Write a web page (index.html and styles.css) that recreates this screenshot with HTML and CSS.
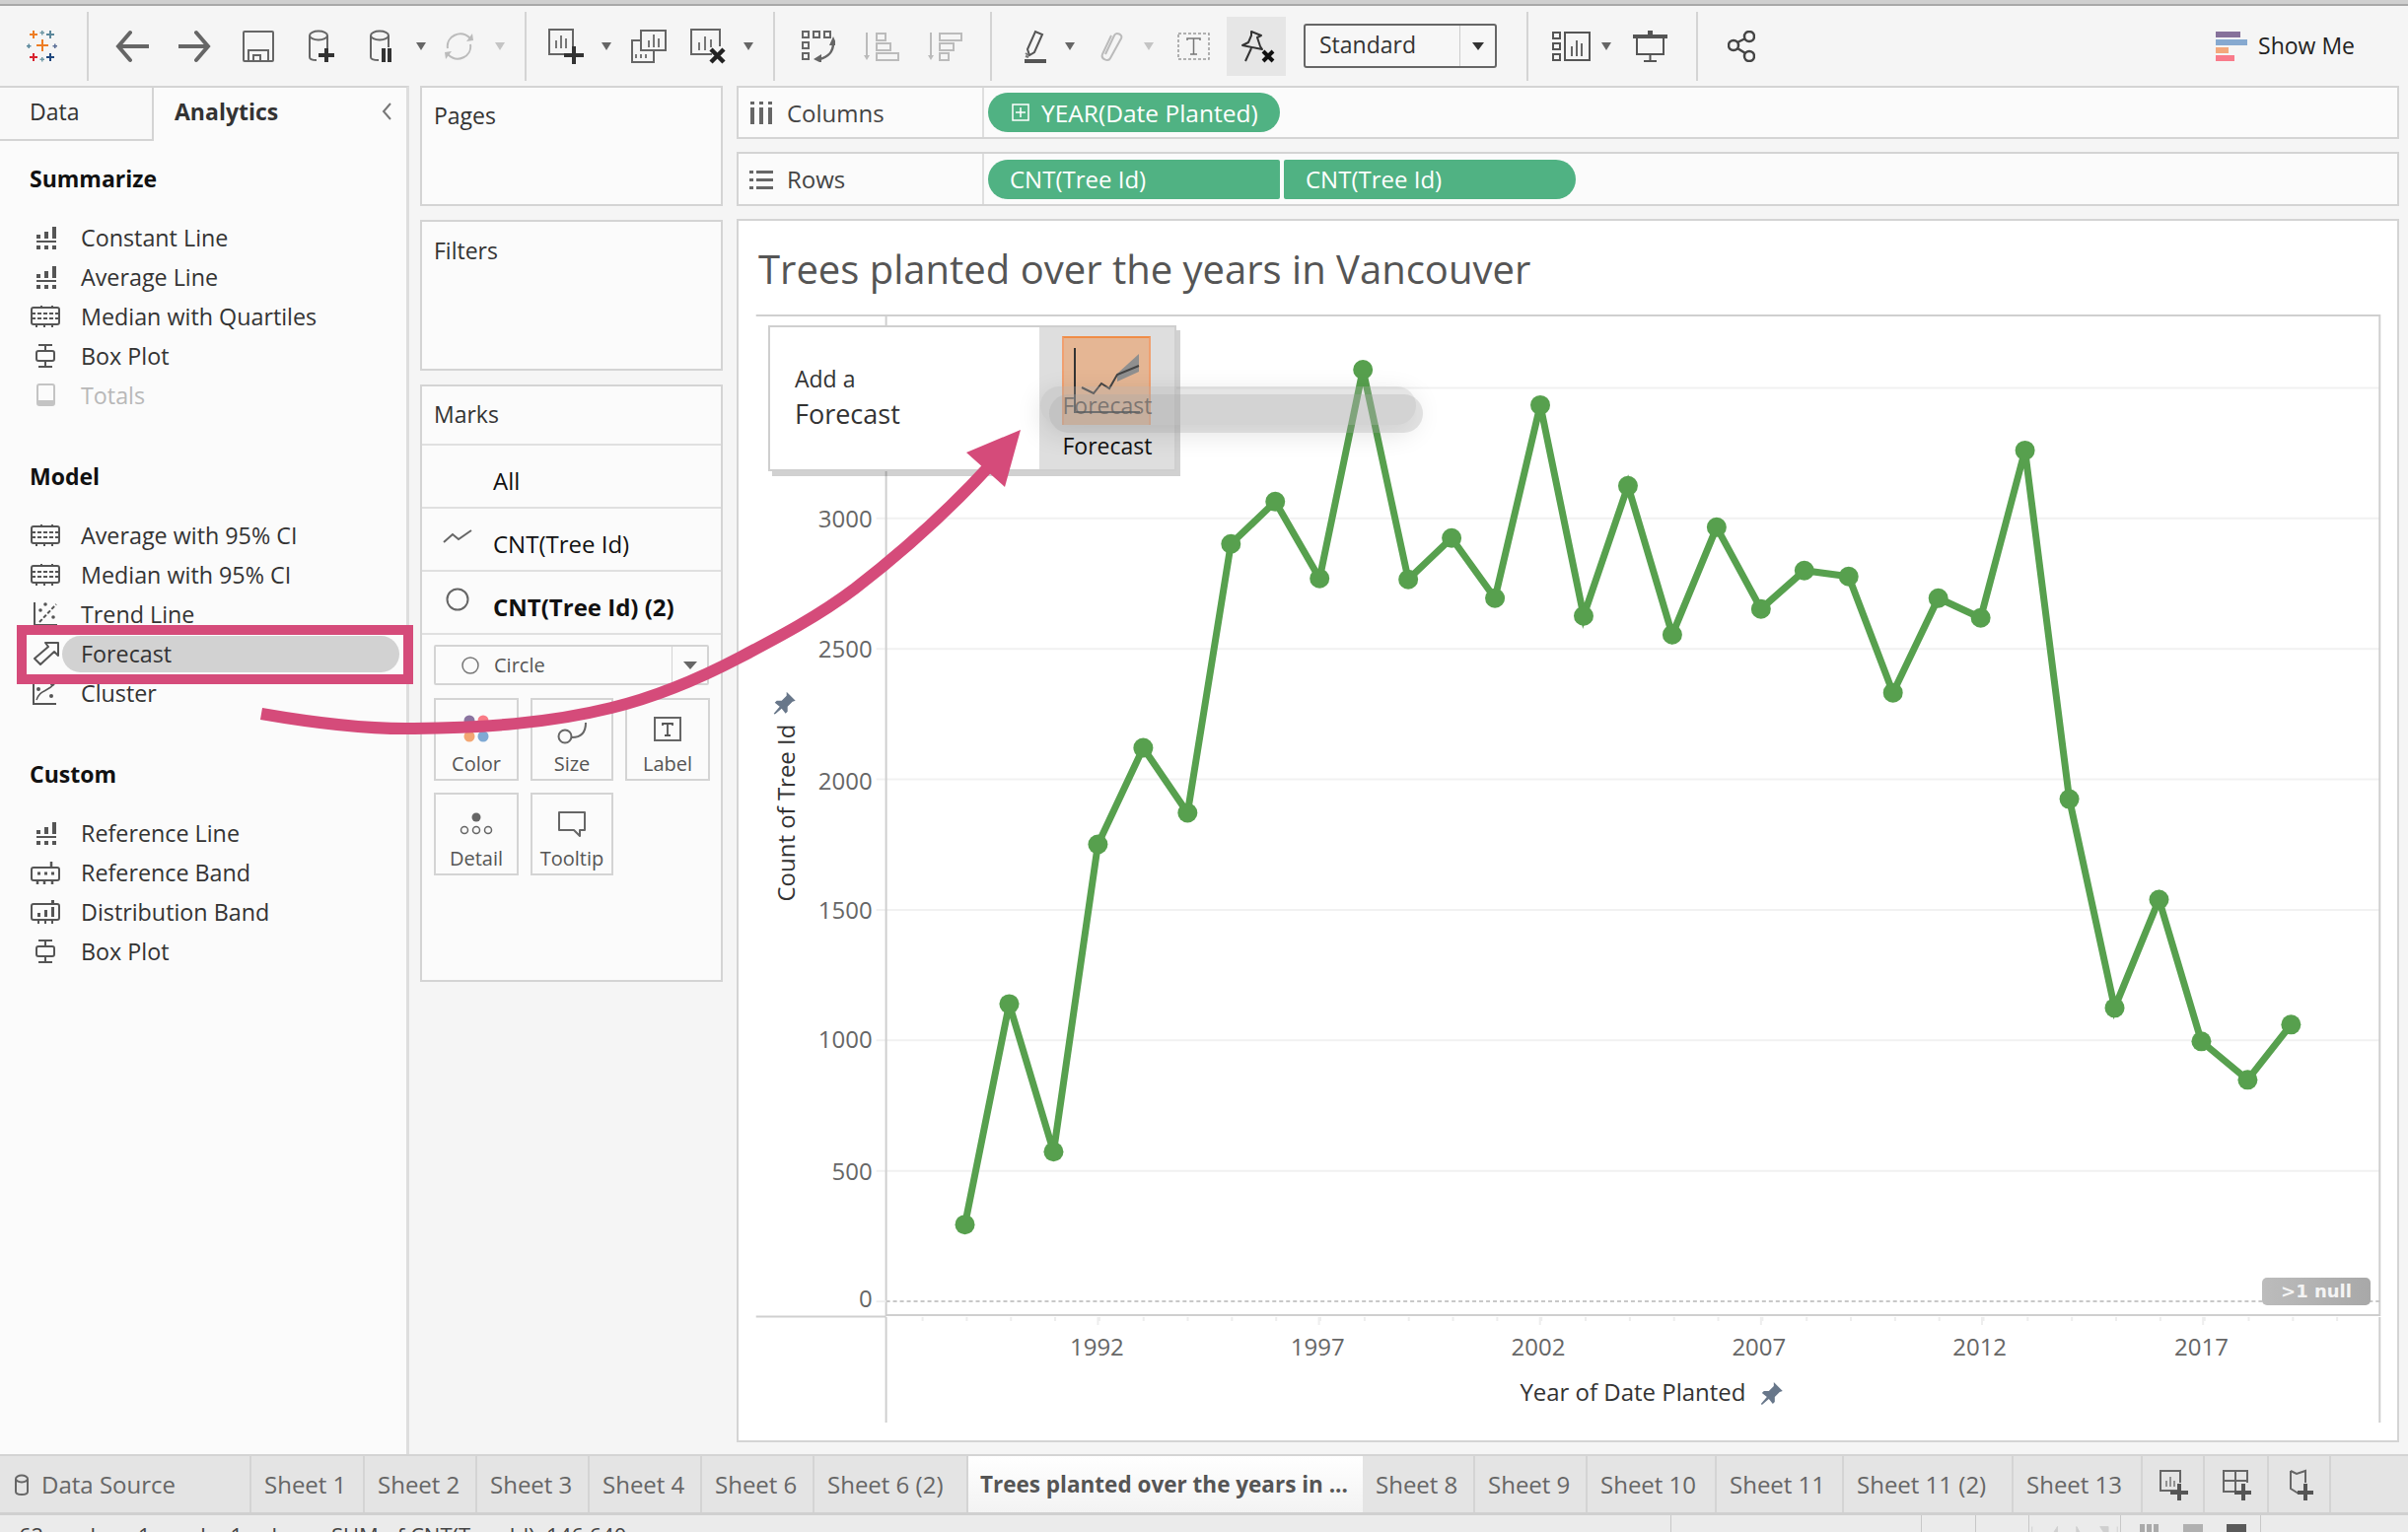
FILE: index.html
```html
<!DOCTYPE html>
<html lang="en">
<head>
    <meta charset="UTF-8">
    <title>Tableau - Trees planted over the years in Vancouver</title>
    <link rel="stylesheet" href="styles.css">
</head>
<body>
    <!-- icons used more than once -->
    <svg class="defs" width="0" height="0">
        <symbol id="i-ref" viewBox="0 0 30 24">
            <path d="M6 9h4v4H6zM14 6h4v7h-4zM22 1h4v12h-4zM6 15h20v2H6zM6 20h4v4H6zM14 20h4v4h-4zM22 20h4v4h-4z" fill="#555"/>
        </symbol>
        <symbol id="i-band" viewBox="0 0 30 24">
            <rect x="1" y="3" width="28" height="17" rx="2" fill="none" stroke="#555" stroke-width="2"/>
            <path d="M1 9h28M1 14h28" stroke="#555" stroke-width="2" stroke-dasharray="4 2"/>
            <path d="M6 20v3M14 20v3M22 20v3M11 1v2M22 1v2" stroke="#555" stroke-width="2"/>
        </symbol>
        <symbol id="i-box" viewBox="0 0 30 24">
            <path d="M15 1v22M8 1h14M8 23h14" stroke="#555" stroke-width="2" fill="none"/>
            <rect x="6" y="7" width="18" height="10" rx="2" fill="#fbfbfb" stroke="#555" stroke-width="2"/>
        </symbol>
        <symbol id="i-cyl" viewBox="0 0 16 22">
            <path d="M2 5v13c0 4 12 4 12 0V5" fill="none" stroke="#666" stroke-width="2"/>
            <ellipse cx="8" cy="5" rx="6" ry="3.5" fill="none" stroke="#666" stroke-width="2"/>
        </symbol>
        <symbol id="i-tack" viewBox="0 0 24 24">
            <path d="M14 1l9 9-3 1-5 5v5l-2 2-4-5-7 6-1-1 6-7-5-4 2-2h5l5-5z"/>
        </symbol>
    </svg>

    <div class="titlebar"></div>

    <div class="toolbar">
        <svg class="tool ml27" width="32" height="32" viewBox="0 0 32 32">
            <path d="M15 9h2v5h5v2h-5v5h-2v-5h-5v-2h5z" fill="#ee7d23"/>
            <path d="M6 0h2v3h3v2H8v3H6V5H3V3h3z" fill="#ee7d23"/>
            <path d="M23 0h2v3h3v2h-3v3h-2V5h-3V3h3z" fill="#5b879b"/>
            <path d="M6 23h2v3h3v2H8v3H6v-3H3v-2h3z" fill="#d8232f"/>
            <path d="M23 23h2v3h3v2h-3v3h-2v-3h-3v-2h3z" fill="#1f477d"/>
            <path d="M15 0h1.500v1.500H18v1.500h-1.500v1.500H15V3h-1.500V1.500H15z" fill="#7199a6"/>
            <path d="M1.500 13.500h1.500V15h1.500v1.500H3V18H1.500v-1.500H0V15h1.500z" fill="#59879b"/>
            <path d="M28 13.500h1.500V15H31v1.500h-1.500V18H28v-1.500h-1.500V15H28z" fill="#5b6f96"/>
            <path d="M15 27h1.500v1.500H18V30h-1.500v1.500H15V30h-1.500v-1.500H15z" fill="#7099a6"/>
        </svg>
        <span class="sep ml29"></span>

        <svg class="tool ml27" width="34" height="34" viewBox="0 0 34 34">
            <path d="M15 3L3 17l12 14M3 17h31" fill="none" stroke="#666" stroke-width="4" stroke-linecap="round"/>
        </svg>
        <svg class="tool ml30" width="33" height="34" viewBox="0 0 33 34">
            <path d="M18 3l12 14-12 14M30 17H0" fill="none" stroke="#666" stroke-width="4" stroke-linecap="round"/>
        </svg>
        <svg class="tool ml32" width="32" height="32" viewBox="0 0 32 32">
            <rect x="1" y="1" width="30" height="30" rx="1" fill="none" stroke="#666" stroke-width="2"/>
            <path d="M6 31V20h20v11M11 31v-6h7v6" fill="none" stroke="#666" stroke-width="2"/>
        </svg>
        <svg class="tool ml34" width="27" height="33" viewBox="0 0 27 33">
            <path d="M2 6v22c0 2 3 3 7 3M20 6v14" fill="none" stroke="#666" stroke-width="2"/>
            <ellipse cx="11" cy="6" rx="9" ry="4.500" fill="none" stroke="#666" stroke-width="2"/>
            <path d="M17 19h4v5h6v4h-6v5h-4v-5h-6v-4h6z" fill="#333"/>
        </svg>
        <svg class="tool ml35" width="24" height="33" viewBox="0 0 24 33">
            <path d="M2 6v22c0 2 3 3 8 3M20 6v12" fill="none" stroke="#666" stroke-width="2"/>
            <ellipse cx="11" cy="6" rx="9" ry="4.500" fill="none" stroke="#666" stroke-width="2"/>
            <path d="M13 19h4v14h-4zM19 19h4v14h-4z" fill="#333"/>
        </svg>
        <svg class="caret ml24" width="10" height="8" viewBox="0 0 10 8"><path d="M0 0h10L5 8z"/></svg>
        <svg class="tool ml17" width="33" height="32" viewBox="0 0 33 32">
            <path d="M5 18C3 6 18-2 28 8M28 14c2 12-13 20-23 10" fill="none" stroke="#bbb" stroke-width="2"/>
            <path d="M24 11l7-1-1-7zM9 21l-7 1 1 7z" fill="#bbb"/>
        </svg>
        <svg class="caret caret-off ml20" width="10" height="8" viewBox="0 0 10 8"><path d="M0 0h10L5 8z"/></svg>
        <span class="sep ml20"></span>

        <svg class="tool ml22" width="36" height="36" viewBox="0 0 36 36">
            <path d="M24 26H1V1h24v17" fill="none" stroke="#666" stroke-width="2"/>
            <path d="M8 12v8M13 7v13M18 10v10" stroke="#777" stroke-width="2"/>
            <path d="M24 18h4v7h8v4h-8v7h-4v-7h-8v-4h8z" fill="#333"/>
        </svg>
        <svg class="caret ml18" width="10" height="8" viewBox="0 0 10 8"><path d="M0 0h10L5 8z"/></svg>
        <svg class="tool ml20" width="36" height="34" viewBox="0 0 36 34">
            <path d="M1 11h22v22H1z" fill="#f5f5f5" stroke="#666" stroke-width="2"/>
            <path d="M10 1h25v20H10z" fill="#f5f5f5" stroke="#666" stroke-width="2"/>
            <path d="M18 11v7M23 5v13M28 9v9M5 25v4M10 25v4M15 25v4" stroke="#777" stroke-width="2"/>
        </svg>
        <svg class="tool ml24" width="36" height="36" viewBox="0 0 36 36">
            <path d="M22 26H1V1h29v17" fill="none" stroke="#666" stroke-width="2"/>
            <path d="M9 14v8M15 8v14M21 11v8" stroke="#777" stroke-width="2"/>
            <path d="M21 21l13 13M34 21L21 34" stroke="#222" stroke-width="4.500"/>
        </svg>
        <svg class="caret ml18" width="10" height="8" viewBox="0 0 10 8"><path d="M0 0h10L5 8z"/></svg>
        <span class="sep ml20"></span>

        <svg class="tool ml27" width="34" height="32" viewBox="0 0 34 32">
            <path d="M1 1h6v6H1zM12 1h6v6h-6zM23 1h6v6h-6zM1 12h6v6H1zM1 23h6v6H1z" fill="none" stroke="#666" stroke-width="2"/>
            <path d="M32 13c0 8-5 14-14 16" fill="none" stroke="#666" stroke-width="2.500"/>
            <path d="M32 6l-4 9h8zM12 29l8-5v9z" fill="#666"/>
        </svg>
        <svg class="tool ml29" width="36" height="32" viewBox="0 0 36 32">
            <path d="M3 2v26" stroke="#bbb" stroke-width="2"/><path d="M0 25h6l-3 5z" fill="#bbb"/>
            <path d="M13 3h9v7h-9zM13 13h14v7H13zM13 23h22v7H13z" fill="none" stroke="#bbb" stroke-width="2"/>
        </svg>
        <svg class="tool ml29" width="35" height="32" viewBox="0 0 35 32">
            <path d="M3 2v26" stroke="#bbb" stroke-width="2"/><path d="M0 25h6l-3 5z" fill="#bbb"/>
            <path d="M12 3h22v7H12zM12 13h14v7H12zM12 23h9v7h-9z" fill="none" stroke="#bbb" stroke-width="2"/>
        </svg>
        <span class="sep ml28"></span>

        <svg class="tool ml33" width="22" height="34" viewBox="0 0 22 34">
            <path d="M3 20L11 2l7 3-8 18-5 3z" fill="none" stroke="#555" stroke-width="2"/>
            <path d="M1 24l3 2M1 27l3 1" stroke="#777" stroke-width="2"/>
            <path d="M0 30h22v4H0z" fill="#555"/>
        </svg>
        <svg class="caret ml19" width="10" height="8" viewBox="0 0 10 8"><path d="M0 0h10L5 8z"/></svg>
        <svg class="tool ml25" width="25" height="32" viewBox="0 0 25 32">
            <path d="M6 24L15 5c2-4 9-1 7 3L11 28c-2 4-10 1-8-4l9-19" fill="none" stroke="#bbb" stroke-width="2"/>
        </svg>
        <svg class="caret caret-off ml20" width="10" height="8" viewBox="0 0 10 8"><path d="M0 0h10L5 8z"/></svg>
        <svg class="tool ml24" width="33" height="28" viewBox="0 0 33 28">
            <rect x="1" y="1" width="31" height="26" fill="none" stroke="#999" stroke-width="1.500" stroke-dasharray="3 2"/>
            <path d="M10 8V6h13v2M16.500 6v16M13 22h7" fill="none" stroke="#777" stroke-width="1.500"/>
        </svg>
        <div class="pin-btn ml17">
            <svg width="38" height="34" viewBox="0 0 38 34">
                <path d="M14 2l10 4-4 2 3 9 2 3-20-4 6-3 3-7zM14 19L8 32" fill="none" stroke="#333" stroke-width="2" stroke-linejoin="round"/>
                <path d="M26 22l10 10M36 22L26 32" stroke="#111" stroke-width="4"/>
            </svg>
        </div>
        <div class="fit-select ml18">
            <span class="fit-name">Standard</span>
            <span class="fit-arrow"><svg width="12" height="8" viewBox="0 0 12 8"><path d="M0 0h12L6 8z" fill="#333"/></svg></span>
        </div>
        <span class="sep ml30"></span>

        <svg class="tool ml24" width="39" height="32" viewBox="0 0 39 32">
            <path d="M1 2h7v6H1zM1 13h7v6H1zM1 24h7v6H1zM13 2h25v28H13z" fill="none" stroke="#555" stroke-width="2"/>
            <path d="M20 16v10M25 10v16M30 13v13" stroke="#666" stroke-width="2"/>
        </svg>
        <svg class="caret ml11" width="10" height="8" viewBox="0 0 10 8"><path d="M0 0h10L5 8z"/></svg>
        <svg class="tool ml22" width="35" height="32" viewBox="0 0 35 32">
            <path d="M0 4h35v4H0zM15 0h5v4h-5z" fill="#555"/>
            <path d="M4 8v16h27V8M17.500 24v7M11 31h13" fill="none" stroke="#555" stroke-width="2"/>
        </svg>
        <span class="sep ml29"></span>

        <svg class="tool ml30" width="28" height="32" viewBox="0 0 28 32">
            <circle cx="6" cy="15" r="5" fill="none" stroke="#444" stroke-width="2.500"/>
            <circle cx="22" cy="6" r="5" fill="none" stroke="#444" stroke-width="2.500"/>
            <circle cx="22" cy="26" r="5" fill="none" stroke="#444" stroke-width="2.500"/>
            <path d="M10 12l8-4M10 18l8 5" stroke="#444" stroke-width="2.500"/>
        </svg>

        <div class="show-me">
            <div class="show-bars">
                <span class="bar-a"></span><span class="bar-b"></span><span class="bar-c"></span><span class="bar-d"></span>
            </div>
            <span class="show-name">Show Me</span>
        </div>
    </div>

    <div class="main">
        <div class="side">
            <div class="side-tabs">
                <div class="side-tab">Data</div>
                <div class="side-tab active">
                    Analytics
                    <svg width="12" height="20" viewBox="0 0 12 20"><path d="M10 2L3 10l7 8" fill="none" stroke="#777" stroke-width="2"/></svg>
                </div>
            </div>

            <h3>Summarize</h3>
            <ul>
                <li><svg class="ic"><use href="#i-ref"/></svg>Constant Line</li>
                <li><svg class="ic"><use href="#i-ref"/></svg>Average Line</li>
                <li><svg class="ic"><use href="#i-band"/></svg>Median with Quartiles</li>
                <li><svg class="ic"><use href="#i-box"/></svg>Box Plot</li>
                <li class="off">
                    <svg class="ic" viewBox="0 0 30 24">
                        <rect x="7" y="1" width="17" height="21" rx="2" fill="none" stroke="#c4c4c4" stroke-width="2"/>
                        <path d="M7 17h17v5H7z" fill="#c4c4c4"/>
                    </svg>Totals
                </li>
            </ul>

            <h3>Model</h3>
            <ul>
                <li><svg class="ic"><use href="#i-band"/></svg>Average with 95% CI</li>
                <li><svg class="ic"><use href="#i-band"/></svg>Median with 95% CI</li>
                <li>
                    <svg class="ic" viewBox="0 0 30 24">
                        <path d="M4 0v23h23" fill="none" stroke="#555" stroke-width="2"/>
                        <path d="M9 20L26 2" stroke="#555" stroke-width="2" stroke-dasharray="4 2"/>
                        <circle cx="10" cy="8" r="1.800" fill="#555"/><circle cx="23" cy="15" r="1.800" fill="#555"/><circle cx="15" cy="2" r="1.800" fill="#555"/>
                    </svg>Trend Line
                </li>
                <li class="picked">
                    <svg class="ic" viewBox="0 0 30 24">
                        <path d="M15 1h13v13l-4-4L10 23l-6-6 14-12z" fill="none" stroke="#555" stroke-width="2" stroke-linejoin="round"/>
                    </svg><span class="picked-name">Forecast</span>
                </li>
                <li>
                    <svg class="ic" viewBox="0 0 30 24">
                        <path d="M3 0v23h23" fill="none" stroke="#555" stroke-width="2"/>
                        <path d="M6 19C10 8 16 12 25 2" fill="none" stroke="#555" stroke-width="1.500"/>
                        <circle cx="8" cy="8" r="2" fill="#555"/><circle cx="21" cy="15" r="2" fill="#555"/><circle cx="22" cy="3" r="2" fill="#555"/>
                    </svg>Cluster
                </li>
            </ul>

            <h3>Custom</h3>
            <ul>
                <li><svg class="ic"><use href="#i-ref"/></svg>Reference Line</li>
                <li>
                    <svg class="ic" viewBox="0 0 30 24">
                        <rect x="1" y="7" width="28" height="13" rx="2" fill="none" stroke="#555" stroke-width="2"/>
                        <path d="M7 13h3M14 13h3M21 13h3" stroke="#555" stroke-width="3"/>
                        <path d="M21 1v6M7 20v4M14 20v4M22 20v4" stroke="#555" stroke-width="2.500"/>
                    </svg>Reference Band
                </li>
                <li>
                    <svg class="ic" viewBox="0 0 30 24">
                        <rect x="1" y="4" width="28" height="16" rx="2" fill="none" stroke="#555" stroke-width="2"/>
                        <path d="M7 13h3v4H7zM14 10h3v7h-3zM21 7h3v10h-3zM21 0h3v4h-3zM7 20h2v4H7zM14 20h2v4h-2zM21 20h2v4h-2z" fill="#555"/>
                    </svg>Distribution Band
                </li>
                <li><svg class="ic"><use href="#i-box"/></svg>Box Plot</li>
            </ul>
        </div>

        <div class="cards">
            <div class="card card-pages"><div class="card-title">Pages</div></div>
            <div class="card card-filters"><div class="card-title">Filters</div></div>
            <div class="card card-marks">
                <div class="card-title">Marks</div>
                <div class="mark-row"><span class="mark-icon"></span>All</div>
                <div class="mark-row">
                    <span class="mark-icon">
                        <svg width="30" height="16" viewBox="0 0 30 16"><path d="M1 14l9-8 6 5L29 2" fill="none" stroke="#666" stroke-width="2"/></svg>
                    </span>CNT(Tree Id)
                </div>
                <div class="mark-row bold">
                    <span class="mark-icon">
                        <svg width="24" height="24" viewBox="0 0 24 24"><circle cx="12" cy="12" r="10.500" fill="none" stroke="#666" stroke-width="2"/></svg>
                    </span>CNT(Tree Id) (2)
                </div>
                <div class="mark-body">
                    <div class="mark-type">
                        <svg width="18" height="18" viewBox="0 0 18 18"><circle cx="9" cy="9" r="8" fill="none" stroke="#777" stroke-width="1.500"/></svg>
                        <span class="mark-type-name">Circle</span>
                        <span class="mark-type-arrow"><svg width="14" height="8" viewBox="0 0 14 8"><path d="M0 0h14L7 8z" fill="#666"/></svg></span>
                    </div>
                    <div class="mark-grid">
                        <div class="mark-btn">
                            <svg width="30" height="30" viewBox="0 0 30 30">
                                <circle cx="8" cy="6" r="5.500" fill="#8b74a0"/><circle cx="22" cy="6" r="5.500" fill="#f97b86"/>
                                <circle cx="8" cy="22" r="5.500" fill="#f3a673"/><circle cx="22" cy="22" r="5.500" fill="#7fa9d4"/>
                            </svg>
                            Color
                        </div>
                        <div class="mark-btn">
                            <svg width="30" height="30" viewBox="0 0 30 30">
                                <circle cx="8" cy="22" r="6.500" fill="none" stroke="#666" stroke-width="2"/>
                                <path d="M15 23c9 0 14-5 14-15" fill="none" stroke="#666" stroke-width="2"/>
                            </svg>
                            Size
                        </div>
                        <div class="mark-btn">
                            <svg width="30" height="30" viewBox="0 0 30 30">
                                <rect x="2" y="3" width="26" height="23" fill="none" stroke="#666" stroke-width="2"/>
                                <path d="M10 11V9h10v2M15 9v12M12 21h6" fill="none" stroke="#555" stroke-width="1.800"/>
                            </svg>
                            Label
                        </div>
                        <div class="mark-btn">
                            <svg width="34" height="30" viewBox="0 0 34 30">
                                <circle cx="17" cy="8" r="4.500" fill="#666"/>
                                <circle cx="5" cy="21" r="3.500" fill="none" stroke="#666" stroke-width="1.500"/>
                                <circle cx="17" cy="21" r="3.500" fill="none" stroke="#666" stroke-width="1.500"/>
                                <circle cx="29" cy="21" r="3.500" fill="none" stroke="#666" stroke-width="1.500"/>
                            </svg>
                            Detail
                        </div>
                        <div class="mark-btn">
                            <svg width="30" height="30" viewBox="0 0 30 30">
                                <path d="M2 3h26v18h-5v6l-6-6H2z" fill="none" stroke="#666" stroke-width="2" stroke-linejoin="round"/>
                            </svg>
                            Tooltip
                        </div>
                    </div>
                </div>
            </div>
        </div>

        <div class="work">
            <div class="shelf">
                <div class="shelf-label">
                    <svg width="24" height="24" viewBox="0 0 24 24"><path d="M1 7h4v17H1zM10 7h4v17h-4zM19 7h4v17h-4z" fill="#666"/><path d="M1 1h4v3H1zM10 1h4v3h-4zM19 1h4v3h-4z" fill="#666"/></svg>
                    Columns
                </div>
                <div class="pills">
                    <div class="pill pill-year">
                        <svg width="18" height="18" viewBox="0 0 18 18"><path d="M1 1h16v16H1zM9 4v10M4 9h10" fill="none" stroke="#fff" stroke-width="1.500"/></svg>
                        YEAR(Date Planted)
                    </div>
                </div>
            </div>
            <div class="shelf">
                <div class="shelf-label">
                    <svg width="24" height="24" viewBox="0 0 24 24"><path d="M0 3h4v3H0zM7 3h17v3H7zM0 11h4v3H0zM7 11h17v3H7zM0 19h4v3H0zM7 19h17v3H7z" fill="#666"/></svg>
                    Rows
                </div>
                <div class="pills">
                    <div class="pill pill-left">CNT(Tree Id)</div>
                    <div class="pill pill-right">CNT(Tree Id)</div>
                </div>
            </div>

            <div class="view">
                <div class="view-title">Trees planted over the years in Vancouver</div>
                <svg class="chart" viewBox="749 305 1682 1156">
                    <g class="grid">
                        <path d="M888 392.500H2414M888 525H2414M888 657.500H2414M888 790H2414M888 922.500H2414M888 1055H2414M888 1187.500H2414"/>
                    </g>
                    <path class="frame" d="M766 319H2414V1334H898V319M766 1335.500H898M898 1336V1443M2414 1336V1443"/>
                    <path class="zero" d="M898 1320H2414"/>
                    <path class="tick-minor" d="M934 1338H2414"/>
                    <path class="tick-major" d="M1112 1340H2414"/>
                    <path class="tick-left" d="M888 1320H898"/>

                    <g class="ax-y">
                        <text x="884" y="534">3000</text>
                        <text x="884" y="666">2500</text>
                        <text x="884" y="800">2000</text>
                        <text x="884" y="932">1500</text>
                        <text x="884" y="1063">1000</text>
                        <text x="884" y="1197">500</text>
                        <text x="884" y="1326">0</text>
                    </g>
                    <g class="ax-x">
                        <text x="1112" y="1375">1992</text>
                        <text x="1336" y="1375">1997</text>
                        <text x="1560" y="1375">2002</text>
                        <text x="1784" y="1375">2007</text>
                        <text x="2008" y="1375">2012</text>
                        <text x="2233" y="1375">2017</text>
                    </g>
                    <text class="ax-title" x="1656" y="1421">Year of Date Planted</text>
                    <use class="ax-pin" href="#i-tack" x="1785" y="1401" width="24" height="24"/>
                    <text class="ax-title" transform="translate(805 824) rotate(-90)">Count of Tree Id</text>
                    <use class="ax-pin" href="#i-tack" x="783" y="700" width="24" height="24"/>

                    <polyline class="trend" points="978,1242 1023,1018 1068,1168 1113,856 1159,758 1204,824 1248,551 1293,508 1338,586 1382,374 1428,587 1472,545 1516,606 1562,410 1606,624 1651,492 1696,643 1741,534 1786,617 1830,578 1875,584 1920,702 1966,606 2009,626 2054,456 2099,810 2145,1022 2190,912 2233,1056 2280,1095 2324,1039"/>
                    <g class="dots">
                        <circle cx="978" cy="1242" r="10"/><circle cx="1023" cy="1018" r="10"/><circle cx="1068" cy="1168" r="10"/>
                        <circle cx="1113" cy="856" r="10"/><circle cx="1159" cy="758" r="10"/><circle cx="1204" cy="824" r="10"/>
                        <circle cx="1248" cy="551" r="10"/><circle cx="1293" cy="508" r="10"/><circle cx="1338" cy="586" r="10"/>
                        <circle cx="1382" cy="374" r="10"/><circle cx="1428" cy="587" r="10"/><circle cx="1472" cy="545" r="10"/>
                        <circle cx="1516" cy="606" r="10"/><circle cx="1562" cy="410" r="10"/><circle cx="1606" cy="624" r="10"/>
                        <circle cx="1651" cy="492" r="10"/><circle cx="1696" cy="643" r="10"/><circle cx="1741" cy="534" r="10"/>
                        <circle cx="1786" cy="617" r="10"/><circle cx="1830" cy="578" r="10"/><circle cx="1875" cy="584" r="10"/>
                        <circle cx="1920" cy="702" r="10"/><circle cx="1966" cy="606" r="10"/><circle cx="2009" cy="626" r="10"/>
                        <circle cx="2054" cy="456" r="10"/><circle cx="2099" cy="810" r="10"/><circle cx="2145" cy="1022" r="10"/>
                        <circle cx="2190" cy="912" r="10"/><circle cx="2233" cy="1056" r="10"/><circle cx="2280" cy="1095" r="10"/>
                        <circle cx="2324" cy="1039" r="10"/>
                    </g>
                </svg>

                <div class="null-badge">&gt;1 null</div>

                <!-- drag over the chart -->
                <div class="drop-pop">
                    <div class="drop-text">Add a<br><span class="drop-big">Forecast</span></div>
                    <div class="drop-target">
                        <div class="drop-icon">
                            <svg width="90" height="90" viewBox="0 0 90 90">
                                <path d="M13 12v65h66" fill="none" stroke="#333" stroke-width="2"/>
                                <path d="M56 38l22-20v18L56 46z" fill="#8f8f8f"/>
                                <path d="M20 52l12 6 8-10 8 5 8-14 22-9" fill="none" stroke="#444" stroke-width="2"/>
                            </svg>
                        </div>
                        <div class="drop-label">Forecast</div>
                    </div>
                </div>
                <div class="drag-ghost">
                    <div class="drag-name">Forecast</div>
                </div>
                <div class="drag-ghost-back"></div>
            </div>
        </div>
    </div>

    <div class="tabs">
        <div class="tab tab-source"><svg width="16" height="22"><use href="#i-cyl"/></svg>Data Source</div>
        <div class="tab">Sheet 1</div>
        <div class="tab">Sheet 2</div>
        <div class="tab">Sheet 3</div>
        <div class="tab">Sheet 4</div>
        <div class="tab">Sheet 6</div>
        <div class="tab">Sheet 6 (2)</div>
        <div class="tab tab-active">Trees planted over the years in ...</div>
        <div class="tab">Sheet 8</div>
        <div class="tab">Sheet 9</div>
        <div class="tab">Sheet 10</div>
        <div class="tab">Sheet 11</div>
        <div class="tab">Sheet 11 (2)</div>
        <div class="tab">Sheet 13</div>
        <div class="tab tab-add">
            <svg width="30" height="32" viewBox="0 0 30 32">
                <path d="M19 22H2V2h20v12" fill="none" stroke="#666" stroke-width="2"/>
                <path d="M8 12v6M12 8v10M16 12v6" stroke="#777" stroke-width="1.500"/>
                <path d="M19 15h4v7h7v4h-7v6h-4v-6h-7v-4h7z" fill="#555"/>
            </svg>
        </div>
        <div class="tab tab-add">
            <svg width="30" height="32" viewBox="0 0 30 32">
                <path d="M18 23H2V2h24v12M14 2v21M2 12h24" fill="none" stroke="#666" stroke-width="2"/>
                <path d="M20 15h4v7h6v4h-6v6h-4v-6h-7v-4h7z" fill="#555"/>
            </svg>
        </div>
        <div class="tab tab-add">
            <svg width="30" height="32" viewBox="0 0 30 32">
                <path d="M6 2l6 3 9-3v12M6 2v18l8 5" fill="none" stroke="#666" stroke-width="2"/>
                <path d="M19 15h4v7h6v4h-6v6h-4v-6h-6v-4h6z" fill="#555"/>
            </svg>
        </div>
    </div>

    <div class="status">
        <div class="stat stat-main">
            <span>62 marks</span><span>1 row by 1 column</span><span>SUM of CNT(Tree Id): 146,640</span>
        </div>
        <div class="stat stat-a"></div>
        <div class="stat stat-b"></div>
        <div class="stat stat-c"></div>
        <div class="stat stat-d">
            <svg width="100" height="14" viewBox="0 0 100 14"><path d="M3 0v14M22 14l9-14v14zM52 0l8 14H52zM78 0l9 14V0zM97 0v14" fill="#cfcfcf" stroke="#cfcfcf"/></svg>
        </div>
        <div class="stat stat-e">
            <span class="view-grid"></span><span class="view-mid"></span><span class="view-dark"></span>
        </div>
    </div>

    <!-- annotation drawn on top of the screenshot -->
    <div class="mark-box"></div>
    <svg class="arrow" width="2442" height="1554" viewBox="0 0 2442 1554">
        <path d="M265 724C317 733 368 740 420 739C490 738 555 734 620 718C665 707 710 688 750 667C790 646 830 625 867 597C915 560 960 520 1004 472" fill="none" stroke="#d54b7a" stroke-width="12"/>
        <path d="M1035 436L980 459L1019 494Z" fill="#d54b7a"/>
    </svg>
</body>
</html>
```

FILE: styles.css
```css
* {
    box-sizing: border-box;
}

html, body {
    height: 100%;
}

body {
    position: relative;
    display: flex;
    flex-direction: column;
    width: 2442px;
    height: 1554px;
    margin: 0;
    overflow: hidden;
    font-family: 'Open Sans', 'Liberation Sans', sans-serif;
    font-size: 23px;
    color: #333;
    background: #f5f5f5;
}

.defs {
    position: absolute;
}

.titlebar {
    flex: none;
    height: 6px;
    background: #cfcfcf;
    border-bottom: 2px solid #a8a8a8;
}

/* toolbar */
.toolbar {
    flex: none;
    display: flex;
    align-items: center;
    height: 81px;
}

.tool, .caret, .sep, .pin-btn, .fit-select {
    flex: none;
}

.caret {
    fill: #666;
}

.caret-off {
    fill: #c4c4c4;
}

.sep {
    width: 2px;
    height: 70px;
    background: #d4d4d4;
}

.ml11 { margin-left: 11px; }
.ml17 { margin-left: 17px; }
.ml18 { margin-left: 18px; }
.ml19 { margin-left: 19px; }
.ml20 { margin-left: 20px; }
.ml22 { margin-left: 22px; }
.ml24 { margin-left: 24px; }
.ml25 { margin-left: 25px; }
.ml27 { margin-left: 27px; }
.ml28 { margin-left: 28px; }
.ml29 { margin-left: 29px; }
.ml30 { margin-left: 30px; }
.ml32 { margin-left: 32px; }
.ml33 { margin-left: 33px; }
.ml34 { margin-left: 34px; }
.ml35 { margin-left: 35px; }

.pin-btn {
    display: flex;
    align-items: center;
    justify-content: center;
    width: 60px;
    height: 60px;
    background: #e6e6e6;
}

.fit-select {
    display: flex;
    align-items: stretch;
    width: 196px;
    height: 45px;
    background: #f7f7f7;
    border: 2px solid #666;
    border-radius: 3px;
}

.fit-name {
    flex: 1;
    padding-left: 14px;
    line-height: 38px;
}

.fit-arrow {
    display: flex;
    align-items: center;
    justify-content: center;
    width: 36px;
    border-left: 1px solid #ccc;
}

.show-me {
    display: flex;
    align-items: center;
    gap: 11px;
    margin-left: auto;
    padding-right: 54px;
    color: #222;
}

.show-name {
    margin-top: -2px;
}

.show-bars {
    display: flex;
    flex-direction: column;
    gap: 2px;
    width: 32px;
}

.show-bars span {
    display: block;
    height: 6px;
}

.bar-a { width: 25px; background: #86719a; }
.bar-b { width: 32px; background: #86a9d0; }
.bar-c { width: 13px; background: #f3a87c; }
.bar-d { width: 19px; background: #f97b8b; }

/* main area */
.main {
    flex: 1;
    display: flex;
    min-height: 0;
}

.side {
    flex: none;
    width: 415px;
    background: #fbfbfb;
    border-top: 2px solid #d4d4d4;
    border-right: 3px solid #dedede;
}

.side-tabs {
    display: flex;
    height: 54px;
    margin-bottom: 22px;
}

.side-tab {
    width: 154px;
    padding-left: 30px;
    line-height: 48px;
    background: #f9f9f9;
    border-bottom: 2px solid #d4d4d4;
}

.side-tab.active {
    display: flex;
    align-items: center;
    justify-content: space-between;
    flex: 1;
    padding: 0 14px 6px 21px;
    font-weight: 700;
    background: #fbfbfb;
    border-left: 2px solid #d4d4d4;
    border-bottom: 0;
}

.side h3 {
    margin: 0 0 24px;
    padding-left: 30px;
    font-size: 23px;
    line-height: 32px;
    color: #111;
}

.side ul {
    margin: 0 0 46px;
    padding: 0;
    list-style: none;
    font-size: 23.300px;
}

.side li {
    display: flex;
    align-items: center;
    height: 40px;
}

.side li.off {
    color: #b8b8b8;
}

.ic {
    flex: none;
    width: 30px;
    height: 24px;
    margin: 0 21px 0 31px;
}

.picked .ic {
    margin-right: 2px;
}

.picked-name {
    flex: none;
    width: 342px;
    height: 37px;
    padding-left: 19px;
    line-height: 36px;
    background: #d2d2d2;
    border-radius: 19px;
}

.cards {
    flex: none;
    display: flex;
    flex-direction: column;
    gap: 14px;
    width: 307px;
    margin-left: 11px;
}

.card {
    background: #fbfbfb;
    border: 2px solid #d4d4d4;
}

.card-pages {
    height: 122px;
}

.card-filters {
    height: 153px;
}

.card-marks {
    height: 606px;
}

.card-title {
    height: 58px;
    padding-left: 12px;
    line-height: 57px;
}

.card-pages .card-title {
    line-height: 57px;
}

.card-filters .card-title {
    line-height: 58px;
}

.mark-row {
    display: flex;
    align-items: center;
    height: 64px;
    padding-top: 9px;
    font-size: 24px;
    color: #111;
    border-top: 2px solid #e0e0e0;
}

.mark-row.bold {
    font-weight: 700;
}

.mark-icon {
    display: flex;
    justify-content: center;
    width: 72px;
    margin-bottom: 16px;
}

.mark-body {
    padding: 10px 12px;
    border-top: 2px solid #e0e0e0;
}

.mark-type {
    display: flex;
    align-items: center;
    height: 41px;
    padding-left: 26px;
    font-size: 20px;
    color: #555;
    border: 2px solid #d4d4d4;
    border-radius: 2px;
}

.mark-type-name {
    flex: 1;
    padding-left: 15px;
}

.mark-type-arrow {
    display: flex;
    align-items: center;
    justify-content: center;
    width: 36px;
    height: 100%;
    border-left: 1px solid #d4d4d4;
}

.mark-grid {
    display: grid;
    grid-template-columns: 86px 84px 86px;
    grid-auto-rows: 84px;
    column-gap: 12px;
    row-gap: 12px;
    margin-top: 13px;
}

.mark-btn {
    display: flex;
    flex-direction: column;
    align-items: center;
    justify-content: flex-end;
    gap: 6px;
    padding-bottom: 2px;
    font-size: 20px;
    color: #555;
    border: 2px solid #d4d4d4;
}

/* shelves and view */
.work {
    flex: 1;
    display: flex;
    flex-direction: column;
    margin: 0 9px 0 14px;
    min-width: 0;
}

.shelf {
    flex: none;
    display: flex;
    height: 55px;
    margin-bottom: 12px;
    background: #fbfbfb;
    border: 2px solid #d4d4d4;
}

.shelf:first-child {
    height: 54px;
    margin-bottom: 13px;
}

.shelf-label {
    display: flex;
    align-items: center;
    gap: 14px;
    width: 249px;
    padding-left: 11px;
    font-size: 24px;
    color: #444;
    border-right: 2px solid #dedede;
}

.pills {
    display: flex;
    align-items: center;
    gap: 4px;
    padding-left: 4px;
}

.pill {
    display: flex;
    align-items: center;
    width: 296px;
    height: 40px;
    padding-left: 22px;
    font-size: 24px;
    color: #fff;
    background: #50b283;
}

.pill-year {
    gap: 12px;
    padding-left: 24px;
    font-size: 24.500px;
    border-radius: 20px;
}

.pill-left {
    border-radius: 20px 2px 2px 20px;
}

.pill-right {
    border-radius: 2px 20px 20px 2px;
}

.view {
    position: relative;
    flex: none;
    display: flex;
    flex-direction: column;
    height: 1241px;
    margin-top: 1px;
    background: #fff;
    border: 2px solid #d4d4d4;
}

.view-title {
    flex: none;
    height: 82px;
    padding-left: 20px;
    font-size: 40px;
    line-height: 98px;
    color: #555;
}

.chart {
    display: block;
    width: 1682px;
    height: 1155px;
    font-family: 'Open Sans', 'Liberation Sans', sans-serif;
}

.grid path {
    fill: none;
    stroke: #f1f1f1;
    stroke-width: 2;
}

.frame {
    fill: none;
    stroke: #cfcfcf;
    stroke-width: 2;
}

.zero {
    stroke: #c8c8c8;
    stroke-width: 2;
    stroke-dasharray: 4 3;
}

.tick-minor {
    stroke: #eee;
    stroke-width: 4;
    stroke-dasharray: 2 42.870;
}

.tick-major {
    stroke: #eee;
    stroke-width: 8;
    stroke-dasharray: 2 222.350;
}

.tick-left {
    stroke: #eee;
    stroke-width: 2;
}

.ax-y text {
    font-size: 24px;
    fill: #666;
    text-anchor: end;
}

.ax-x text {
    font-size: 24px;
    fill: #666;
    text-anchor: middle;
}

.ax-title {
    font-size: 24px;
    fill: #333;
    text-anchor: middle;
}

.ax-pin {
    fill: #68778a;
}

.trend {
    fill: none;
    stroke: #57a04e;
    stroke-width: 7;
}

.dots circle {
    fill: #57a04e;
}

.null-badge {
    position: absolute;
    left: 1545px;
    top: 1072px;
    width: 110px;
    height: 28px;
    font-family: 'DejaVu Sans', sans-serif;
    font-size: 18px;
    font-weight: 700;
    line-height: 28px;
    text-align: center;
    color: #f4f4f4;
    background: linear-gradient(to right, #bcbcbc, #a8a8a8);
    border-radius: 5px;
}

.drop-pop {
    position: absolute;
    left: 30px;
    top: 106px;
    display: flex;
    width: 414px;
    height: 148px;
    background: #fff;
    border: 2px solid #cfcfcf;
    box-shadow: 4px 5px 0 rgba(0, 0, 0, 0.18);
}

.drop-text {
    flex: 1;
    padding: 35px 0 0 25px;
    line-height: 34px;
    color: #333;
}

.drop-big {
    font-size: 27px;
    line-height: 38px;
}

.drop-target {
    flex: none;
    width: 137px;
    padding: 9px 0 0 23px;
    background: #dedede;
}

.drop-icon {
    width: 90px;
    height: 90px;
    background: #e5b694;
    border-top: 2px solid #f08c46;
    border-left: 2px solid #f0a070;
    border-right: 2px solid #f0a070;
}

.drop-icon svg {
    display: block;
    margin: -2px 0 0 -2px;
}

.drop-label {
    width: 92px;
    margin-top: 5px;
    text-align: center;
    color: #111;
}

.drag-ghost, .drag-ghost-back {
    position: absolute;
    height: 39px;
    border-radius: 20px;
    background: rgba(170, 170, 170, 0.3);
}

.drag-ghost {
    left: 306px;
    top: 168px;
    width: 381px;
    box-shadow: 0 8px 28px rgba(0, 0, 0, 0.12);
}

.drag-ghost-back {
    left: 315px;
    top: 176px;
    width: 379px;
}

.drag-name {
    width: 92px;
    margin-left: 22px;
    line-height: 38px;
    text-align: center;
    color: rgba(60, 60, 60, 0.7);
}

/* sheet tabs */
.tabs {
    flex: none;
    display: grid;
    grid-template-columns: 255px 115px 114px 114px 114px 114px 156px 400px 114px 114px 131px 129px 172px 131px 63px 65px 63px;
    height: 62px;
    font-size: 24px;
    color: #666;
    background: #e4e4e4;
    border-top: 2px solid #d4d4d4;
    border-bottom: 3px solid #d0d0d0;
}

.tab {
    display: flex;
    align-items: center;
    padding-left: 13px;
    border-right: 2px solid #d4d4d4;
    white-space: nowrap;
}

.tab-source {
    gap: 12px;
    padding-left: 14px;
}

.tab-active {
    padding-left: 12px;
    font-size: 22.500px;
    font-weight: 700;
    color: #555;
    background: linear-gradient(to bottom, #fff, #f3f3f3);
    border-right: 0;
}

.tab-add {
    justify-content: center;
    padding: 0;
}

/* status bar, cut off by the window */
.status {
    flex: none;
    display: grid;
    grid-template-columns: 1695px 254px 55px 54px 93px 142px;
    height: 17px;
    overflow: hidden;
    font-size: 22px;
    color: #444;
    background: #ebebeb;
}

.stat {
    display: flex;
    align-items: flex-start;
    padding-top: 6px;
    border-right: 1px solid #c8c8c8;
    line-height: 28px;
    white-space: nowrap;
}

.stat-main span:nth-child(1) { width: 121px; margin-left: 19px; }
.stat-main span:nth-child(2) { width: 196px; }

.stat-d {
    align-items: flex-start;
    justify-content: center;
    padding-top: 11px;
    overflow: hidden;
}

.stat-e {
    gap: 24px;
    padding: 9px 0 0 19px;
}

.stat-e span {
    display: block;
    width: 20px;
    height: 20px;
}

.view-grid {
    background: repeating-linear-gradient(to right, #aaa 0, #aaa 5px, #ebebeb 5px, #ebebeb 7px);
}

.view-mid {
    background: #b0b0b0;
}

.view-dark {
    background: #5a5a5a;
}

/* annotation */
.mark-box {
    position: absolute;
    left: 17px;
    top: 634px;
    width: 402px;
    height: 60px;
    border: 10px solid #d54b7a;
}

.arrow {
    position: absolute;
    left: 0;
    top: 0;
    pointer-events: none;
}
```
